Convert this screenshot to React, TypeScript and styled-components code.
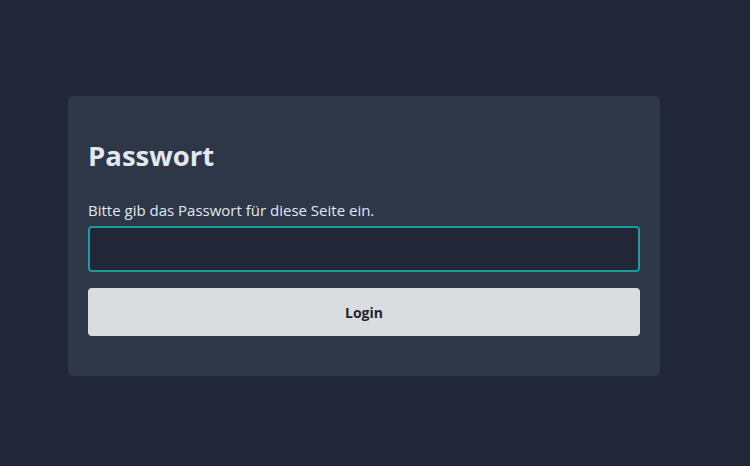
import React from "react";
import styled, { createGlobalStyle } from "styled-components";

const Global = createGlobalStyle`
  html, body { margin: 0; padding: 0; background: #222738; }
  body { font-family: "Open Sans", "Noto Sans", sans-serif; }
  * { box-sizing: border-box; }
`;

const Page = styled.div`
  min-height: 466px;
  padding: 96px 90px 0 68px;
`;

const Card = styled.form`
  width: 592px;
  background: #2d3748;
  border-radius: 4px;
  padding: 40px 20px 40px;
  display: flex;
  flex-direction: column;
`;

const Title = styled.h1`
  margin: 0 0 24px;
  font-size: 27.5px;
  line-height: 40px;
  font-weight: 700;
  color: #e2e8f0;
`;

const Label = styled.label`
  font-size: 15px;
  line-height: 20px;
  color: #e2e8f0;
  margin-bottom: 6px;
`;

const Input = styled.input`
  height: 46px;
  width: 100%;
  background: #222738;
  border: 2px solid #1f9a9e;
  border-radius: 4px;
  color: #e2e8f0;
  outline: none;
  padding: 0 12px;
  font-size: 15px;
`;

const Button = styled.button`
  margin-top: 16px;
  height: 48px;
  width: 100%;
  border: none;
  border-radius: 4px;
  background: #d9dde0;
  color: #1f2533;
  font-family: inherit;
  font-size: 14px;
  font-weight: 700;
`;

export default function App() {
  return (
    <Page>
      <Global />
      <Card onSubmit={(e) => e.preventDefault()}>
        <Title>Passwort</Title>
        <Label htmlFor="pw">Bitte gib das Passwort für diese Seite ein.</Label>
        <Input id="pw" type="password" />
        <Button type="submit">Login</Button>
      </Card>
    </Page>
  );
}
